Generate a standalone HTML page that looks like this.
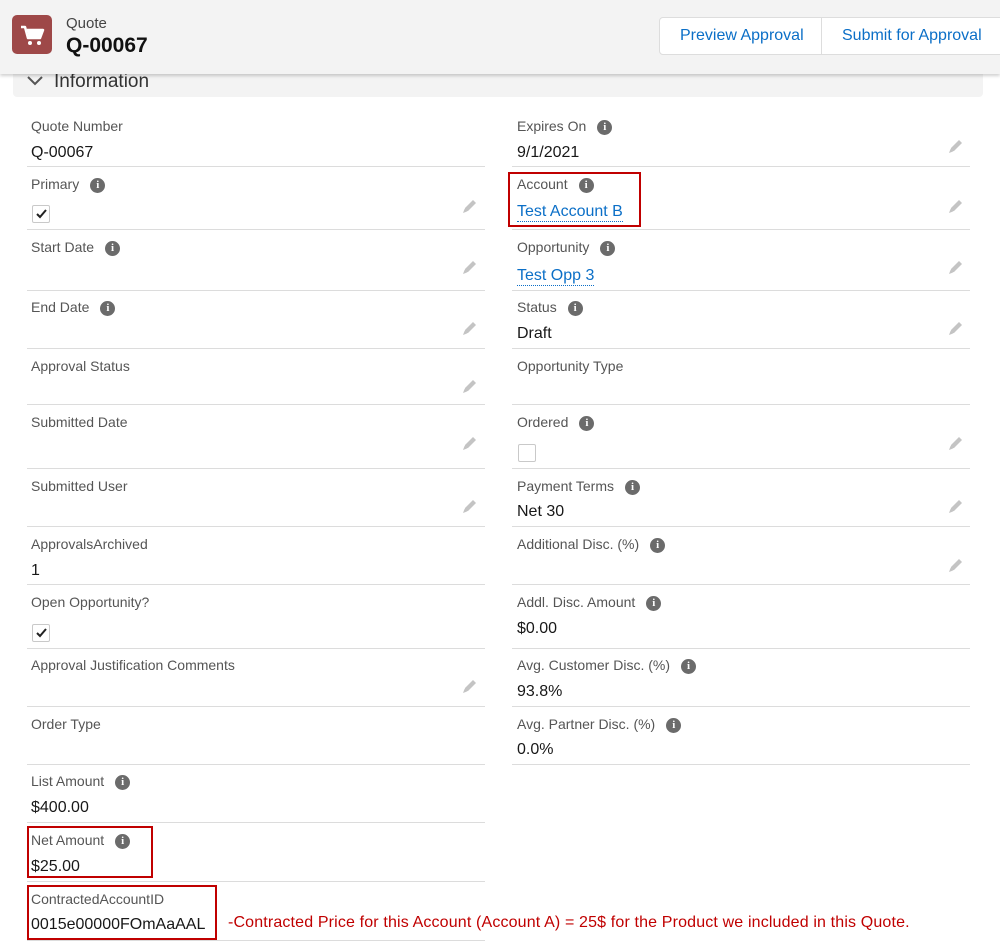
<!DOCTYPE html>
<html><head><meta charset="utf-8"><style>
*{margin:0;padding:0;box-sizing:border-box}
body{width:1000px;height:948px;background:#fff;font-family:"Liberation Sans",sans-serif;position:relative;overflow:hidden}
.a{position:absolute;white-space:nowrap}
.l{font-size:14px;color:#555;line-height:16px}
.v{font-size:16px;color:#181818;line-height:18px}
.lk{color:#0b6fc7;border-bottom:1px dotted #0b6fc7;line-height:18px}
.d{position:absolute;height:1px;background:#dcdcdc}
.i{display:inline-block;width:15px;height:15px;border-radius:50%;background:#6b6b6b;color:#fff;font-size:11px;font-weight:bold;text-align:center;line-height:15px;margin-left:11px;vertical-align:1px;font-family:"Liberation Serif",serif}
.cb{position:absolute;width:18px;height:18px;border:1px solid #c9c9c9;border-radius:2px;background:#fff}
.cb svg{position:absolute;left:3px;top:3px}
.p{position:absolute;width:16px;height:16px}
.rb{position:absolute;border:2px solid #c00000}
</style></head><body>
<div class="a" style="left:0;top:0;width:1000px;height:74px;background:#f3f3f3;box-shadow:0 2px 3px rgba(0,0,0,.18);z-index:2"></div>
<div class="a" style="left:12px;top:15px;width:40px;height:39px;background:#9e4848;border-radius:5px;z-index:3">
<svg width="40" height="39" viewBox="0 0 40 39"><path d="M9 12h4l3 11h12l3-8H15" fill="none" stroke="#fff" stroke-width="2.5" stroke-linejoin="round"/><path d="M15 15h16l-3 8H17z" fill="#fff"/><circle cx="18" cy="28" r="2" fill="#fff"/><circle cx="27" cy="28" r="2" fill="#fff"/></svg></div>
<div class="a" style="left:66px;top:15px;font-size:15px;color:#444;z-index:3">Quote</div>
<div class="a" style="left:66px;top:34px;font-size:21px;font-weight:bold;color:#111;z-index:3">Q-00067</div>
<div class="a" style="left:659px;top:17px;width:345px;height:38px;background:#fff;border:1px solid #ddd;border-radius:4px;z-index:3"></div>
<div class="a" style="left:821px;top:17px;width:1px;height:38px;background:#ddd;z-index:3"></div>
<div class="a" style="left:680px;top:27px;font-size:16px;color:#0b6fc7;z-index:3">Preview Approval</div>
<div class="a" style="left:842px;top:27px;font-size:16px;color:#0b6fc7;z-index:3">Submit for Approval</div>
<div class="a" style="left:13px;top:60px;width:970px;height:37px;background:#f3f3f3;border-radius:4px"></div>
<svg class="a" style="left:26px;top:75px" width="18" height="12" viewBox="0 0 18 12"><path d="M2 2l7 7 7-7" fill="none" stroke="#555" stroke-width="2"/></svg>
<div class="a" style="left:54px;top:71px;font-size:19px;color:#333">Information</div>

<div class="a l" style="left:31px;top:118px">Quote Number</div>
<div class="a v" style="left:31px;top:144px">Q-00067</div>
<div class="d" style="left:27px;top:166px;width:458px"></div>
<div class="a l" style="left:31px;top:176px">Primary<span class="i">i</span></div>
<div class="cb" style="left:32px;top:205px"><svg width="11" height="10"><path d="M1 5l3 3 6-7" fill="none" stroke="#222" stroke-width="2"/></svg></div>
<div class="d" style="left:27px;top:229px;width:458px"></div>
<div class="a l" style="left:31px;top:239px">Start Date<span class="i">i</span></div>
<div class="d" style="left:27px;top:290px;width:458px"></div>
<div class="a l" style="left:31px;top:299px">End Date<span class="i">i</span></div>
<div class="d" style="left:27px;top:348px;width:458px"></div>
<div class="a l" style="left:31px;top:358px">Approval Status</div>
<div class="d" style="left:27px;top:404px;width:458px"></div>
<div class="a l" style="left:31px;top:414px">Submitted Date</div>
<div class="d" style="left:27px;top:468px;width:458px"></div>
<div class="a l" style="left:31px;top:478px">Submitted User</div>
<div class="d" style="left:27px;top:526px;width:458px"></div>
<div class="a l" style="left:31px;top:536px">ApprovalsArchived</div>
<div class="a v" style="left:31px;top:562px">1</div>
<div class="d" style="left:27px;top:584px;width:458px"></div>
<div class="a l" style="left:31px;top:594px">Open Opportunity?</div>
<div class="cb" style="left:32px;top:624px"><svg width="11" height="10"><path d="M1 5l3 3 6-7" fill="none" stroke="#222" stroke-width="2"/></svg></div>
<div class="d" style="left:27px;top:648px;width:458px"></div>
<div class="a l" style="left:31px;top:657px">Approval Justification Comments</div>
<div class="d" style="left:27px;top:706px;width:458px"></div>
<div class="a l" style="left:31px;top:716px">Order Type</div>
<div class="d" style="left:27px;top:764px;width:458px"></div>
<div class="a l" style="left:31px;top:773px">List Amount<span class="i">i</span></div>
<div class="a v" style="left:31px;top:799px">$400.00</div>
<div class="d" style="left:27px;top:822px;width:458px"></div>
<div class="a l" style="left:31px;top:832px">Net Amount<span class="i">i</span></div>
<div class="a v" style="left:31px;top:858px">$25.00</div>
<div class="d" style="left:27px;top:881px;width:458px"></div>
<div class="a l" style="left:31px;top:891px">ContractedAccountID</div>
<div class="a v" style="left:31px;top:916px">0015e00000FOmAaAAL</div>
<div class="d" style="left:27px;top:940px;width:458px"></div>

<div class="a l" style="left:517px;top:118px">Expires On<span class="i">i</span></div>
<div class="a v" style="left:517px;top:144px">9/1/2021</div>
<div class="d" style="left:512px;top:166px;width:458px"></div>
<div class="a l" style="left:517px;top:176px">Account<span class="i">i</span></div>
<div class="a v lk" style="left:517px;top:203px">Test Account B</div>
<div class="d" style="left:512px;top:229px;width:458px"></div>
<div class="a l" style="left:517px;top:239px">Opportunity<span class="i">i</span></div>
<div class="a v lk" style="left:517px;top:267px">Test Opp 3</div>
<div class="d" style="left:512px;top:290px;width:458px"></div>
<div class="a l" style="left:517px;top:299px">Status<span class="i">i</span></div>
<div class="a v" style="left:517px;top:325px">Draft</div>
<div class="d" style="left:512px;top:348px;width:458px"></div>
<div class="a l" style="left:517px;top:358px">Opportunity Type</div>
<div class="d" style="left:512px;top:404px;width:458px"></div>
<div class="a l" style="left:517px;top:414px">Ordered<span class="i">i</span></div>
<div class="cb" style="left:518px;top:444px"></div>
<div class="d" style="left:512px;top:468px;width:458px"></div>
<div class="a l" style="left:517px;top:478px">Payment Terms<span class="i">i</span></div>
<div class="a v" style="left:517px;top:503px">Net 30</div>
<div class="d" style="left:512px;top:526px;width:458px"></div>
<div class="a l" style="left:517px;top:536px">Additional Disc. (%)<span class="i">i</span></div>
<div class="d" style="left:512px;top:584px;width:458px"></div>
<div class="a l" style="left:517px;top:594px">Addl. Disc. Amount<span class="i">i</span></div>
<div class="a v" style="left:517px;top:620px">$0.00</div>
<div class="d" style="left:512px;top:648px;width:458px"></div>
<div class="a l" style="left:517px;top:657px">Avg. Customer Disc. (%)<span class="i">i</span></div>
<div class="a v" style="left:517px;top:683px">93.8%</div>
<div class="d" style="left:512px;top:706px;width:458px"></div>
<div class="a l" style="left:517px;top:716px">Avg. Partner Disc. (%)<span class="i">i</span></div>
<div class="a v" style="left:517px;top:741px">0.0%</div>
<div class="d" style="left:512px;top:764px;width:458px"></div>

<svg width="0" height="0" style="position:absolute"><defs><symbol id="pc" viewBox="0 0 16 16"><path d="M3 13l1-4 8-8 3 3-8 8z" fill="#c4c4c4"/><path d="M2 14l1.5-4 2.5 2.5z" fill="#c4c4c4"/></symbol></defs></svg>
<svg class="p" style="left:461px;top:199px"><use href="#pc"/></svg>
<svg class="p" style="left:461px;top:260px"><use href="#pc"/></svg>
<svg class="p" style="left:461px;top:321px"><use href="#pc"/></svg>
<svg class="p" style="left:461px;top:379px"><use href="#pc"/></svg>
<svg class="p" style="left:461px;top:436px"><use href="#pc"/></svg>
<svg class="p" style="left:461px;top:499px"><use href="#pc"/></svg>
<svg class="p" style="left:461px;top:679px"><use href="#pc"/></svg>
<svg class="p" style="left:947px;top:139px"><use href="#pc"/></svg>
<svg class="p" style="left:947px;top:199px"><use href="#pc"/></svg>
<svg class="p" style="left:947px;top:260px"><use href="#pc"/></svg>
<svg class="p" style="left:947px;top:321px"><use href="#pc"/></svg>
<svg class="p" style="left:947px;top:436px"><use href="#pc"/></svg>
<svg class="p" style="left:947px;top:499px"><use href="#pc"/></svg>
<svg class="p" style="left:947px;top:558px"><use href="#pc"/></svg>

<div class="rb" style="left:508px;top:172px;width:133px;height:55px"></div>
<div class="rb" style="left:27px;top:826px;width:126px;height:52px"></div>
<div class="rb" style="left:27px;top:885px;width:190px;height:55px"></div>
<div class="a" style="left:228px;top:914px;font-size:16px;letter-spacing:0.15px;color:#c00000">-Contracted Price for this Account (Account A) = 25$ for the Product we included in this Quote.</div>
</body></html>
